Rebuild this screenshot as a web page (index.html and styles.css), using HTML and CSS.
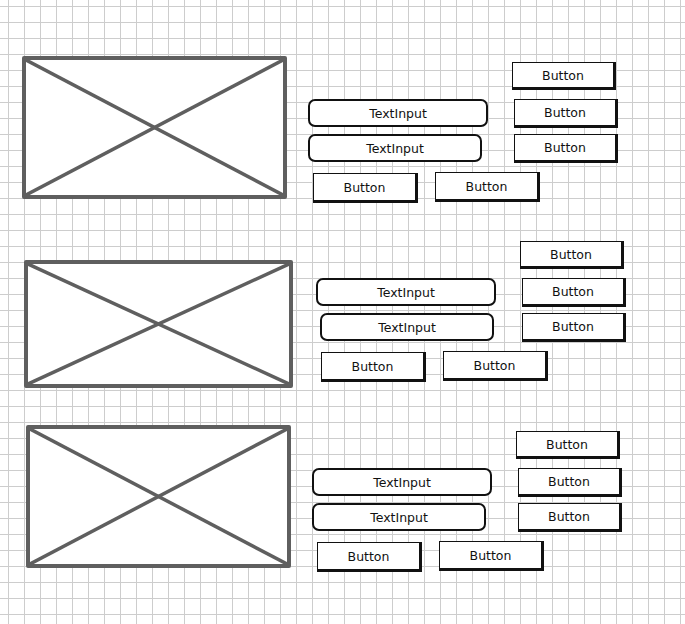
FILE: index.html
```html
<!DOCTYPE html>
<html lang="en">
<head>
  <meta charset="UTF-8">
  <meta name="viewport" content="width=device-width, initial-scale=1.0">
  <title>Wireframe</title>
  <link rel="stylesheet" href="styles.css">
</head>
<body>

  <div class="canvas">

    <!-- Group 1 -->
    <div class="group group-1">
      <div class="placeholder">
        <svg viewBox="0 0 100 100" preserveAspectRatio="none">
          <line x1="0" y1="0" x2="100" y2="100" vector-effect="non-scaling-stroke"/>
          <line x1="0" y1="100" x2="100" y2="0" vector-effect="non-scaling-stroke"/>
        </svg>
      </div>
      <div class="controls">
        <div class="btn btn-top">Button</div>
        <div class="text-input">TextInput</div>
        <div class="btn">Button</div>
        <div class="text-input short">TextInput</div>
        <div class="btn">Button</div>
        <div class="btn-row">
          <div class="btn">Button</div>
          <div class="btn">Button</div>
        </div>
      </div>
    </div>

    <!-- Group 2 -->
    <div class="group group-2">
      <div class="placeholder">
        <svg viewBox="0 0 100 100" preserveAspectRatio="none">
          <line x1="0" y1="0" x2="100" y2="100" vector-effect="non-scaling-stroke"/>
          <line x1="0" y1="100" x2="100" y2="0" vector-effect="non-scaling-stroke"/>
        </svg>
      </div>
      <div class="controls">
        <div class="btn btn-top">Button</div>
        <div class="text-input">TextInput</div>
        <div class="btn">Button</div>
        <div class="text-input short">TextInput</div>
        <div class="btn">Button</div>
        <div class="btn-row">
          <div class="btn">Button</div>
          <div class="btn">Button</div>
        </div>
      </div>
    </div>

    <!-- Group 3 -->
    <div class="group group-3">
      <div class="placeholder">
        <svg viewBox="0 0 100 100" preserveAspectRatio="none">
          <line x1="0" y1="0" x2="100" y2="100" vector-effect="non-scaling-stroke"/>
          <line x1="0" y1="100" x2="100" y2="0" vector-effect="non-scaling-stroke"/>
        </svg>
      </div>
      <div class="controls">
        <div class="btn btn-top">Button</div>
        <div class="text-input">TextInput</div>
        <div class="btn">Button</div>
        <div class="text-input short">TextInput</div>
        <div class="btn">Button</div>
        <div class="btn-row">
          <div class="btn">Button</div>
          <div class="btn">Button</div>
        </div>
      </div>
    </div>

  </div>

</body>
</html>
```

FILE: styles.css
```css
body {
  margin: 0;
  padding: 0;
  font-family: 'DejaVu Sans', sans-serif;
  font-size: 12.5px;
  color: #111;
  background-color: #fff;
  background-image:
    linear-gradient(to right, #cdcdcd 1px, transparent 1px),
    linear-gradient(to bottom, #cdcdcd 1px, transparent 1px);
  background-size: 16px 16px;
  background-position: 8px 6px;
  min-height: 624px;
}

.canvas {
  padding-top: 56px;
}

/* one row: picture + form controls */
.group {
  display: flex;
  align-items: flex-start;
}

.group-2 {
  margin-top: 38px;
}

.group-3 {
  margin-top: 37px;
}

.placeholder {
  box-sizing: border-box;
  width: 265px;
  height: 143px;
  margin-left: 22px;
  border: 4px solid #5f5f5f;
  border-radius: 2px;
  background-color: #fff;
}

.placeholder svg {
  display: block;
  width: 100%;
  height: 100%;
}

.placeholder line {
  stroke: #5f5f5f;
  stroke-width: 3.5;
}

.group-2 .placeholder {
  width: 269px;
  height: 128px;
  margin-left: 24px;
  margin-top: 19px;
}

.group-3 .placeholder {
  margin-left: 26px;
}

.controls {
  display: grid;
  grid-template-columns: 206px 104px;
  row-gap: 6px;
  margin-left: 21px;
  margin-top: 6px;
}

.group-2 .controls {
  margin-left: 23px;
  margin-top: 0;
}

.group-2 .text-input.short {
  margin-left: 4px;
}

/* hand drawn button */
.btn {
  box-sizing: border-box;
  width: 104px;
  height: 29px;
  display: flex;
  justify-content: center;
  align-items: center;
  background-color: #fff;
  border-top: 1px solid #111;
  border-left: 1px solid #111;
  border-right: 3px solid #111;
  border-bottom: 3px solid #111;
}

.btn-top {
  grid-column: 2;
  margin-left: -2px;
  margin-bottom: 3px;
  height: 28px;
}

.text-input {
  box-sizing: border-box;
  width: 180px;
  height: 28px;
  display: flex;
  justify-content: center;
  align-items: center;
  background-color: #fff;
  border: 2px solid #111;
  border-radius: 7px;
}

.text-input.short {
  width: 174px;
}

.btn-row {
  grid-column: 1 / 3;
  display: flex;
  align-items: flex-start;
  gap: 17px;
  margin-top: 4px;
  padding-left: 5px;
}

.btn-row .btn {
  width: 105px;
  height: 30px;
}

.btn-row .btn + .btn {
  margin-top: -1px;
}
```
